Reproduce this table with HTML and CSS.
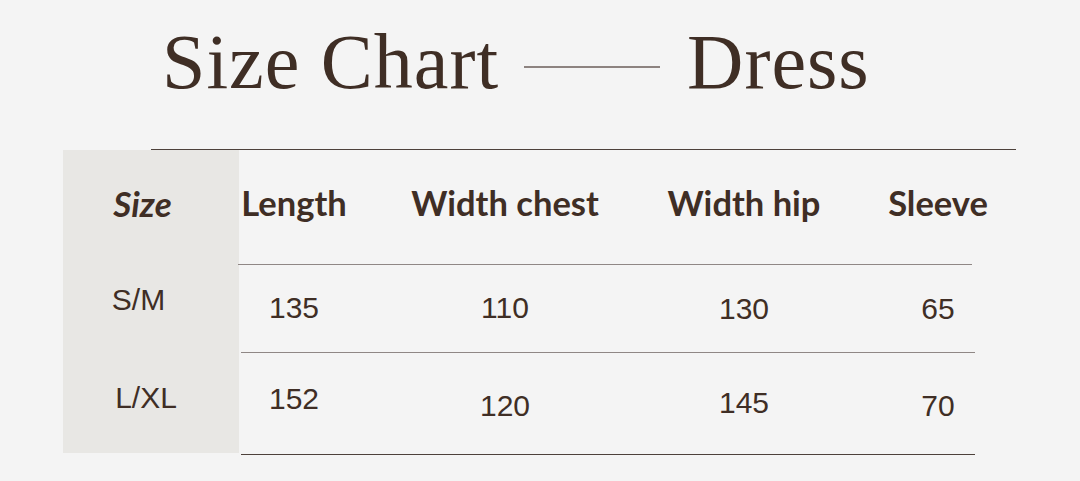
FILE: index.html
```html
<!DOCTYPE html>
<html>
<head>
<meta charset="utf-8">
<link rel="stylesheet" href="styles.css">
</head>
<body>
<div class="page">
  <header class="title">
    <span class="title-a">Size Chart</span>
    <span class="dash"></span>
    <span class="title-b">Dress</span>
  </header>
  <div class="rule-top"></div>
  <div class="chart">
    <div class="size-col">
      <div class="size-head">Size</div>
      <div class="size-cell sm">S/M</div>
      <div class="size-cell lxl">L/XL</div>
    </div>
    <div class="data">
      <div class="row head">
        <div class="cell">Length</div>
        <div class="cell">Width chest</div>
        <div class="cell">Width hip</div>
        <div class="cell">Sleeve</div>
      </div>
      <div class="line line-head"></div>
      <div class="row r1">
        <div class="cell">135</div>
        <div class="cell">110</div>
        <div class="cell d1">130</div>
        <div class="cell d1">65</div>
      </div>
      <div class="line line-mid"></div>
      <div class="row r2">
        <div class="cell">152</div>
        <div class="cell d7">120</div>
        <div class="cell d4">145</div>
        <div class="cell d7">70</div>
      </div>
      <div class="line line-bottom"></div>
    </div>
  </div>
</div>
</body>
</html>
```

FILE: styles.css
```css
* { box-sizing: border-box; }
html, body { margin: 0; padding: 0; }
body {
  background: #f4f4f4;
  color: #3f2e25;
  width: 1080px;
  height: 481px;
  overflow: hidden;
}
.page { padding-top: 23px; }

.title {
  display: flex;
  align-items: flex-start;
  padding-left: 162px;
  height: 78px;
  font-family: "Liberation Serif", "DejaVu Serif", serif;
  font-size: 78px;
  line-height: 78px;
  letter-spacing: 1px;
  white-space: nowrap;
}
.dash {
  display: block;
  width: 136px;
  height: 2px;
  background: #8d8380;
  margin: 43px 27px 0 25px;
}

.rule-top {
  margin: 48px 0 0 151px;
  width: 865px;
  height: 1px;
  background: #4d413b;
}

.chart { display: flex; }

.size-col {
  margin-left: 63px;
  width: 176px;
  height: 303px;
  background: #e8e7e4;
  font-family: "Liberation Sans", Arial, sans-serif;
  font-size: 30px;
  line-height: 30px;
  text-align: center;
}
.size-head {
  height: 115px;
  padding-top: 36px;
  padding-right: 17px;
  font-family: Lato, "Open Sans", sans-serif;
  font-weight: 700;
  font-style: italic;
  font-size: 35px;
  line-height: 35px;
}
.size-cell { height: 88px; }
.sm { padding-top: 20px; padding-right: 25px; }
.lxl { height: 100px; padding-top: 30px; padding-right: 10px; }

.data { width: 810px; margin-left: -1px; }
.row {
  display: grid;
  grid-template-columns: 112px 310px 168px 220px;
  text-align: center;
}
.cell { white-space: nowrap; }
.head {
  height: 114px;
  padding-top: 36px;
  font-family: Lato, "Open Sans", sans-serif;
  font-weight: 700;
  font-size: 34.5px;
  line-height: 34.5px;
}
.r1, .r2 {
  font-family: "Liberation Sans", Arial, sans-serif;
  font-size: 30px;
  line-height: 30px;
}
.r1 { height: 87px; padding-top: 28px; }
.r2 { height: 101px; padding-top: 31px; }
.d1 { padding-top: 1px; }
.d4 { padding-top: 4px; }
.d7 { padding-top: 7px; }

.line { height: 1px; width: 734px; }
.line-head { background: #8f8785; }
.line-mid { background: #8f8785; margin-left: 3px; }
.line-bottom { background: #4d413b; margin-left: 3px; }
```
